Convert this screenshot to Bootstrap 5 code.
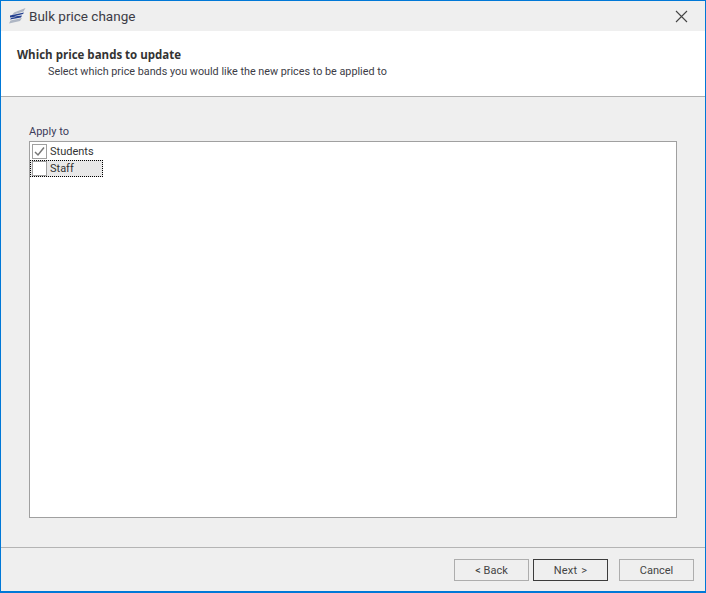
<!DOCTYPE html>
<html lang="en">
<head>
<meta charset="utf-8">
<title>Bulk price change</title>
<link href="https://cdn.jsdelivr.net/npm/bootstrap@5.3.0/dist/css/bootstrap.min.css" rel="stylesheet">
<style>
html,body{height:100%;margin:0;overflow:hidden}
body{font-family:Roboto,"Open Sans",sans-serif;font-size:11px;color:#333;background:#f0f0f0;line-height:1}
.win-frame{width:706px;height:593px;border:1px solid #0078d7;border-bottom-width:2px;background:#efefef}
.win-title{height:30px;flex:none;padding-left:8px;gap:3px;font-size:13.5px;color:#3c3c46}
.win-label{padding-top:1px}
.win-close{width:13px;height:13px;margin-right:17px}
.wiz-head{height:66px;flex:none;background:#fff;border-bottom:1px solid #b0b0b0;padding:17px 0 0 16px}
.wiz-h1{font-family:"Open Sans",sans-serif;font-weight:700;font-size:11.5px;color:#333;line-height:13px}
.wiz-sub{padding-left:31px;margin-top:4px;line-height:13px;font-size:10.8px;color:#3c3c46}
.wiz-body{padding:28px 28px 29px 28px}
.apply-lbl{line-height:14px;height:16px;color:#3c3c5a}
.check-box-list{height:377px;background:#fff;border:1px solid #a0a0a0;padding:1px 0}
.chk-row{height:17px;gap:3px;padding-left:2px;width:73px;color:#333;line-height:15px;padding-bottom:1px}
.chk-row.is-focus{outline:1px dotted #000;outline-offset:-1px;background:#e8e8e8}
.chk-mark{width:15px;height:15px;border:1px solid #a0a0a0;background:#fff}
.wiz-foot{height:44px;flex:none;border-top:1px solid #b4b4b4;padding:11px 11px 0 0;gap:4px}
.wiz-btn{width:75px;height:22px;border:1px solid #adadad;background:#efefef;color:#444;font-size:11px;line-height:1;padding:0;border-radius:0}
.wiz-btn.is-default{border-color:#3c3c3c;word-spacing:1px;letter-spacing:.2px}
.wiz-btn.is-cancel{margin-left:7px}
</style>
</head>
<body>
<div class="win-frame d-flex flex-column">
  <div class="win-title d-flex align-items-center">
    <svg width="17" height="16" viewBox="0 0 17 16" aria-hidden="true">
      <path d="M5 4.5 L16.5 0 L14.5 3.5 L3 7Z" fill="#aeb6c4"/>
      <path d="M1 7.5 L15 4.5 L14 6 L4 8.5 L13 7.5 L12 9.5 L1 11.5 L2 10 L9 8.5 L1 9.5Z" fill="#233f8f"/>
      <path d="M0 15.5 L1.5 12.5 L13 10 L11 13Z" fill="#aeb6c4"/>
    </svg>
    <span class="win-label flex-grow-1">Bulk price change</span>
    <svg class="win-close" viewBox="0 0 13 13" aria-hidden="true"><path d="M1 1L12 12M12 1L1 12" stroke="#444" stroke-width="1.1" fill="none"/></svg>
  </div>
  <div class="wiz-head">
    <div class="wiz-h1">Which price bands to update</div>
    <div class="wiz-sub">Select which price bands you would like the new prices to be applied to</div>
  </div>
  <div class="wiz-body flex-grow-1 d-flex flex-column">
    <div class="apply-lbl">Apply to</div>
    <div class="check-box-list">
      <div class="chk-row d-flex align-items-center">
        <span class="chk-mark d-flex align-items-center justify-content-center">
          <svg width="11" height="11" viewBox="0 0 11 11" aria-hidden="true"><path d="M1 6L4 9L10 1.5" stroke="#777" stroke-width="1.5" fill="none"/></svg>
        </span>
        <span>Students</span>
      </div>
      <div class="chk-row is-focus d-flex align-items-center">
        <span class="chk-mark"></span>
        <span>Staff</span>
      </div>
    </div>
  </div>
  <div class="wiz-foot d-flex justify-content-end">
    <button type="button" class="btn wiz-btn">&lt; Back</button>
    <button type="button" class="btn wiz-btn is-default">Next &gt;</button>
    <button type="button" class="btn wiz-btn is-cancel">Cancel</button>
  </div>
</div>
<script src="https://cdn.jsdelivr.net/npm/bootstrap@5.3.0/dist/js/bootstrap.bundle.min.js"></script>
</body>
</html>
